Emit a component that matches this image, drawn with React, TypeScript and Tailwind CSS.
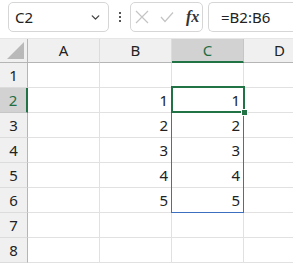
import { ChevronDown } from "lucide-react";

const cols = ["A", "B", "C", "D"];
const rows = [1, 2, 3, 4, 5, 6, 7, 8];

const values: Record<number, number> = { 2: 1, 3: 2, 4: 3, 5: 4, 6: 5 };

export default function App() {
  return (
    <div
      className="w-[293px] h-[263px] overflow-hidden bg-white text-[#222]"
      style={{ fontFamily: '"Noto Sans", "Open Sans", sans-serif' }}
    >
      {/* toolbar */}
      <div className="h-[38px] flex items-start pt-[2px] pl-[8px]">
        <div className="w-[101px] h-[30px] shrink-0 border border-[#d6d6d6] rounded-[5px] flex items-center justify-between pl-[6px] pr-[6px]">
          <span className="text-[15px] leading-none">C2</span>
          <ChevronDown size={13} strokeWidth={2.5} className="text-[#444]" />
        </div>
        <div className="w-[21px] h-[30px] shrink-0 flex flex-col items-center justify-center gap-[2px]">
          <div className="w-[2px] h-[2px] bg-[#555]" />
          <div className="w-[2px] h-[2px] bg-[#555]" />
          <div className="w-[2px] h-[2px] bg-[#555]" />
        </div>
        <div className="w-[73px] h-[30px] shrink-0 border border-[#d6d6d6] rounded-[5px] flex items-center pl-[3px]">
          <svg width="14" height="14" viewBox="0 0 14 14" className="ml-[1px]">
            <path d="M1 1 L13 13 M13 1 L1 13" stroke="#c4c4c4" strokeWidth="1.2" fill="none" />
          </svg>
          <svg width="14" height="12" viewBox="0 0 14 12" className="ml-[11px]">
            <path d="M1 6 L5 10.5 L13 1.5" stroke="#c4c4c4" strokeWidth="1.2" fill="none" />
          </svg>
          <span
            className="ml-[12px] text-[16px] italic font-bold leading-none text-[#333]"
            style={{ fontFamily: '"Liberation Serif", serif' }}
          >
            fx
          </span>
        </div>
        <div className="ml-[5px] flex-1 h-[30px] border border-[#d6d6d6] border-r-0 rounded-l-[5px] flex items-center pl-[12px]">
          <span className="text-[15px] leading-none">=B2:B6</span>
        </div>
      </div>

      {/* grid */}
      <div className="relative">
        <div className="flex h-[25px] bg-[#f0f0f0] border-t border-[#e6e6e6]">
          <div className="w-[28px] shrink-0 border-r border-b border-[#b5b5b5] relative">
            <div
              className="absolute right-[3px] bottom-[3px] w-[17px] h-[17px] bg-[#b9b9b9]"
              style={{ clipPath: "polygon(100% 0, 100% 100%, 0 100%)" }}
            />
          </div>
          {cols.map((c) => (
            <div
              key={c}
              className={
                c === "C"
                  ? "w-[72px] shrink-0 flex items-center justify-center text-[15px] bg-[#d2d2d2] text-[#1f6e43] border-r border-[#c6c6c6] border-b-2 border-b-[#217346]"
                  : "w-[72px] shrink-0 flex items-center justify-center text-[15px] border-r border-[#dcdcdc] border-b border-b-[#b5b5b5]"
              }
            >
              {c}
            </div>
          ))}
        </div>
        {rows.map((r) => (
          <div key={r} className="flex h-[25px]">
            <div
              className={
                r === 2
                  ? "w-[28px] shrink-0 flex items-center justify-center text-[15px] bg-[#d2d2d2] text-[#1f6e43] border-b border-[#c6c6c6] border-r-2 border-r-[#217346]"
                  : "w-[28px] shrink-0 flex items-center justify-center text-[15px] bg-[#f0f0f0] border-b border-[#dcdcdc] border-r border-r-[#b5b5b5]"
              }
            >
              {r}
            </div>
            {cols.map((c) => (
              <div
                key={c}
                className="w-[72px] shrink-0 border-r border-b border-[#e1e1e1] flex items-center justify-end pr-[3px] text-[15px]"
              >
                {(c === "B" || c === "C") && values[r] !== undefined ? values[r] : ""}
              </div>
            ))}
          </div>
        ))}

        {/* range C3:C6 */}
        <div className="absolute left-[171px] top-[74px] w-[73px] h-[101px] border border-[#3d6fc1] pointer-events-none" />
        {/* active cell C2 */}
        <div className="absolute left-[171px] top-[48px] w-[74px] h-[27px] border-2 border-[#217346] pointer-events-none" />
        {/* fill handle */}
        <div className="absolute left-[241px] top-[71px] w-[7px] h-[7px] bg-[#217346] border border-white pointer-events-none" />
      </div>
    </div>
  );
}
